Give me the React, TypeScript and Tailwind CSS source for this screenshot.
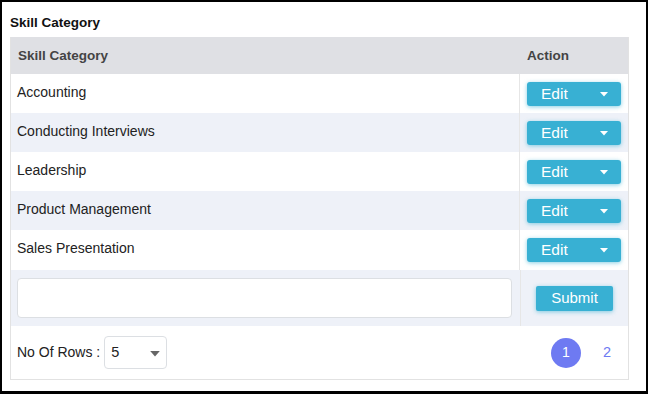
import React from "react";

const rows = [
  "Accounting",
  "Conducting Interviews",
  "Leadership",
  "Product Management",
  "Sales Presentation",
];

function Caret({ className }: { className?: string }) {
  return (
    <svg width="8" height="5" viewBox="0 0 8 5" className={className}>
      <path d="M0 0 L8 0 L4 4.5 Z" fill="currentColor" />
    </svg>
  );
}

export default function App() {
  return (
    <div
      className="w-[648px] h-[394px] border-2 border-b-[3px] border-black bg-white pl-[8px] pt-[13px]"
      style={{ fontFamily: '"Liberation Sans", Arial, sans-serif' }}
    >
      <div className="text-[13.5px] font-bold text-[#111] leading-[16px] h-[22px]">Skill Category</div>
      <div className="w-[619px] border border-t-0 border-[#e2e2e2]">
        {/* header */}
        <div className="flex h-[37px] bg-[#dfe0e4] text-[13.5px] font-bold text-[#444]">
          <div className="flex-1 flex items-center pl-[7px] pt-[1px]">Skill Category</div>
          <div className="w-[109px] flex items-center pl-[8px] pt-[1px]">Action</div>
        </div>
        {rows.map((r, i) => (
          <div
            key={r}
            className={`flex text-[14px] text-[#222] ${i % 2 === 1 ? "bg-[#eef1f8]" : "bg-white"} ${i === 4 ? "h-[40px]" : "h-[39px]"}`}
          >
            <div className="flex-1 pl-[6px] pt-[10px] leading-[17px]">{r}</div>
            <div className="w-[109px] border-l border-[#e6e6e6] pl-[7px] pt-[8px]">
              <button className="w-[94px] h-[24px] rounded-[3px] bg-[#38b0d3] text-white text-[15.5px] flex items-center justify-between pl-[14px] pr-[13px] shadow-[0_1px_4px_rgba(56,176,211,0.6)]">
                <span>Edit</span>
                <Caret className="text-white" />
              </button>
            </div>
          </div>
        ))}
        {/* input row */}
        <div className="flex h-[56px] bg-[#eef1f8]">
          <div className="flex-1 pl-[6px] pt-[8px] pr-[8px]">
            <div className="w-[495px] h-[40px] rounded-[4px] border border-[#dcdfe3] bg-white"></div>
          </div>
          <div className="w-[109px] border-l border-[#e6e6e6] pl-[15px] pt-[16px]">
            <button className="w-[77px] h-[25px] rounded-[2px] bg-[#38b0d3] text-white text-[15px] flex items-center justify-center shadow-[0_1px_4px_rgba(56,176,211,0.6)]">
              Submit
            </button>
          </div>
        </div>
        {/* footer */}
        <div className="flex h-[53px] items-center pl-[6px] pr-[15px]">
          <span className="text-[14px] text-[#222]">No Of Rows :</span>
          <div className="ml-[4px] w-[63px] h-[33px] rounded-[4px] border border-[#dcdfe3] flex items-center justify-between pl-[6px] pr-[6px] mt-[-1px]">
            <span className="text-[14.5px] text-[#222] mt-[2px]">5</span>
            <Caret className="text-[#666] mt-[4px] w-[10px] h-[6px]" />
          </div>
          <div className="flex-1" />
          <div className="w-[30px] h-[30px] rounded-full bg-[#6e7af2] text-white text-[14px] flex items-center justify-center">1</div>
          <div className="ml-[22px] text-[#6e7af2] text-[14.5px] w-[10px]">2</div>
        </div>
      </div>
    </div>
  );
}
